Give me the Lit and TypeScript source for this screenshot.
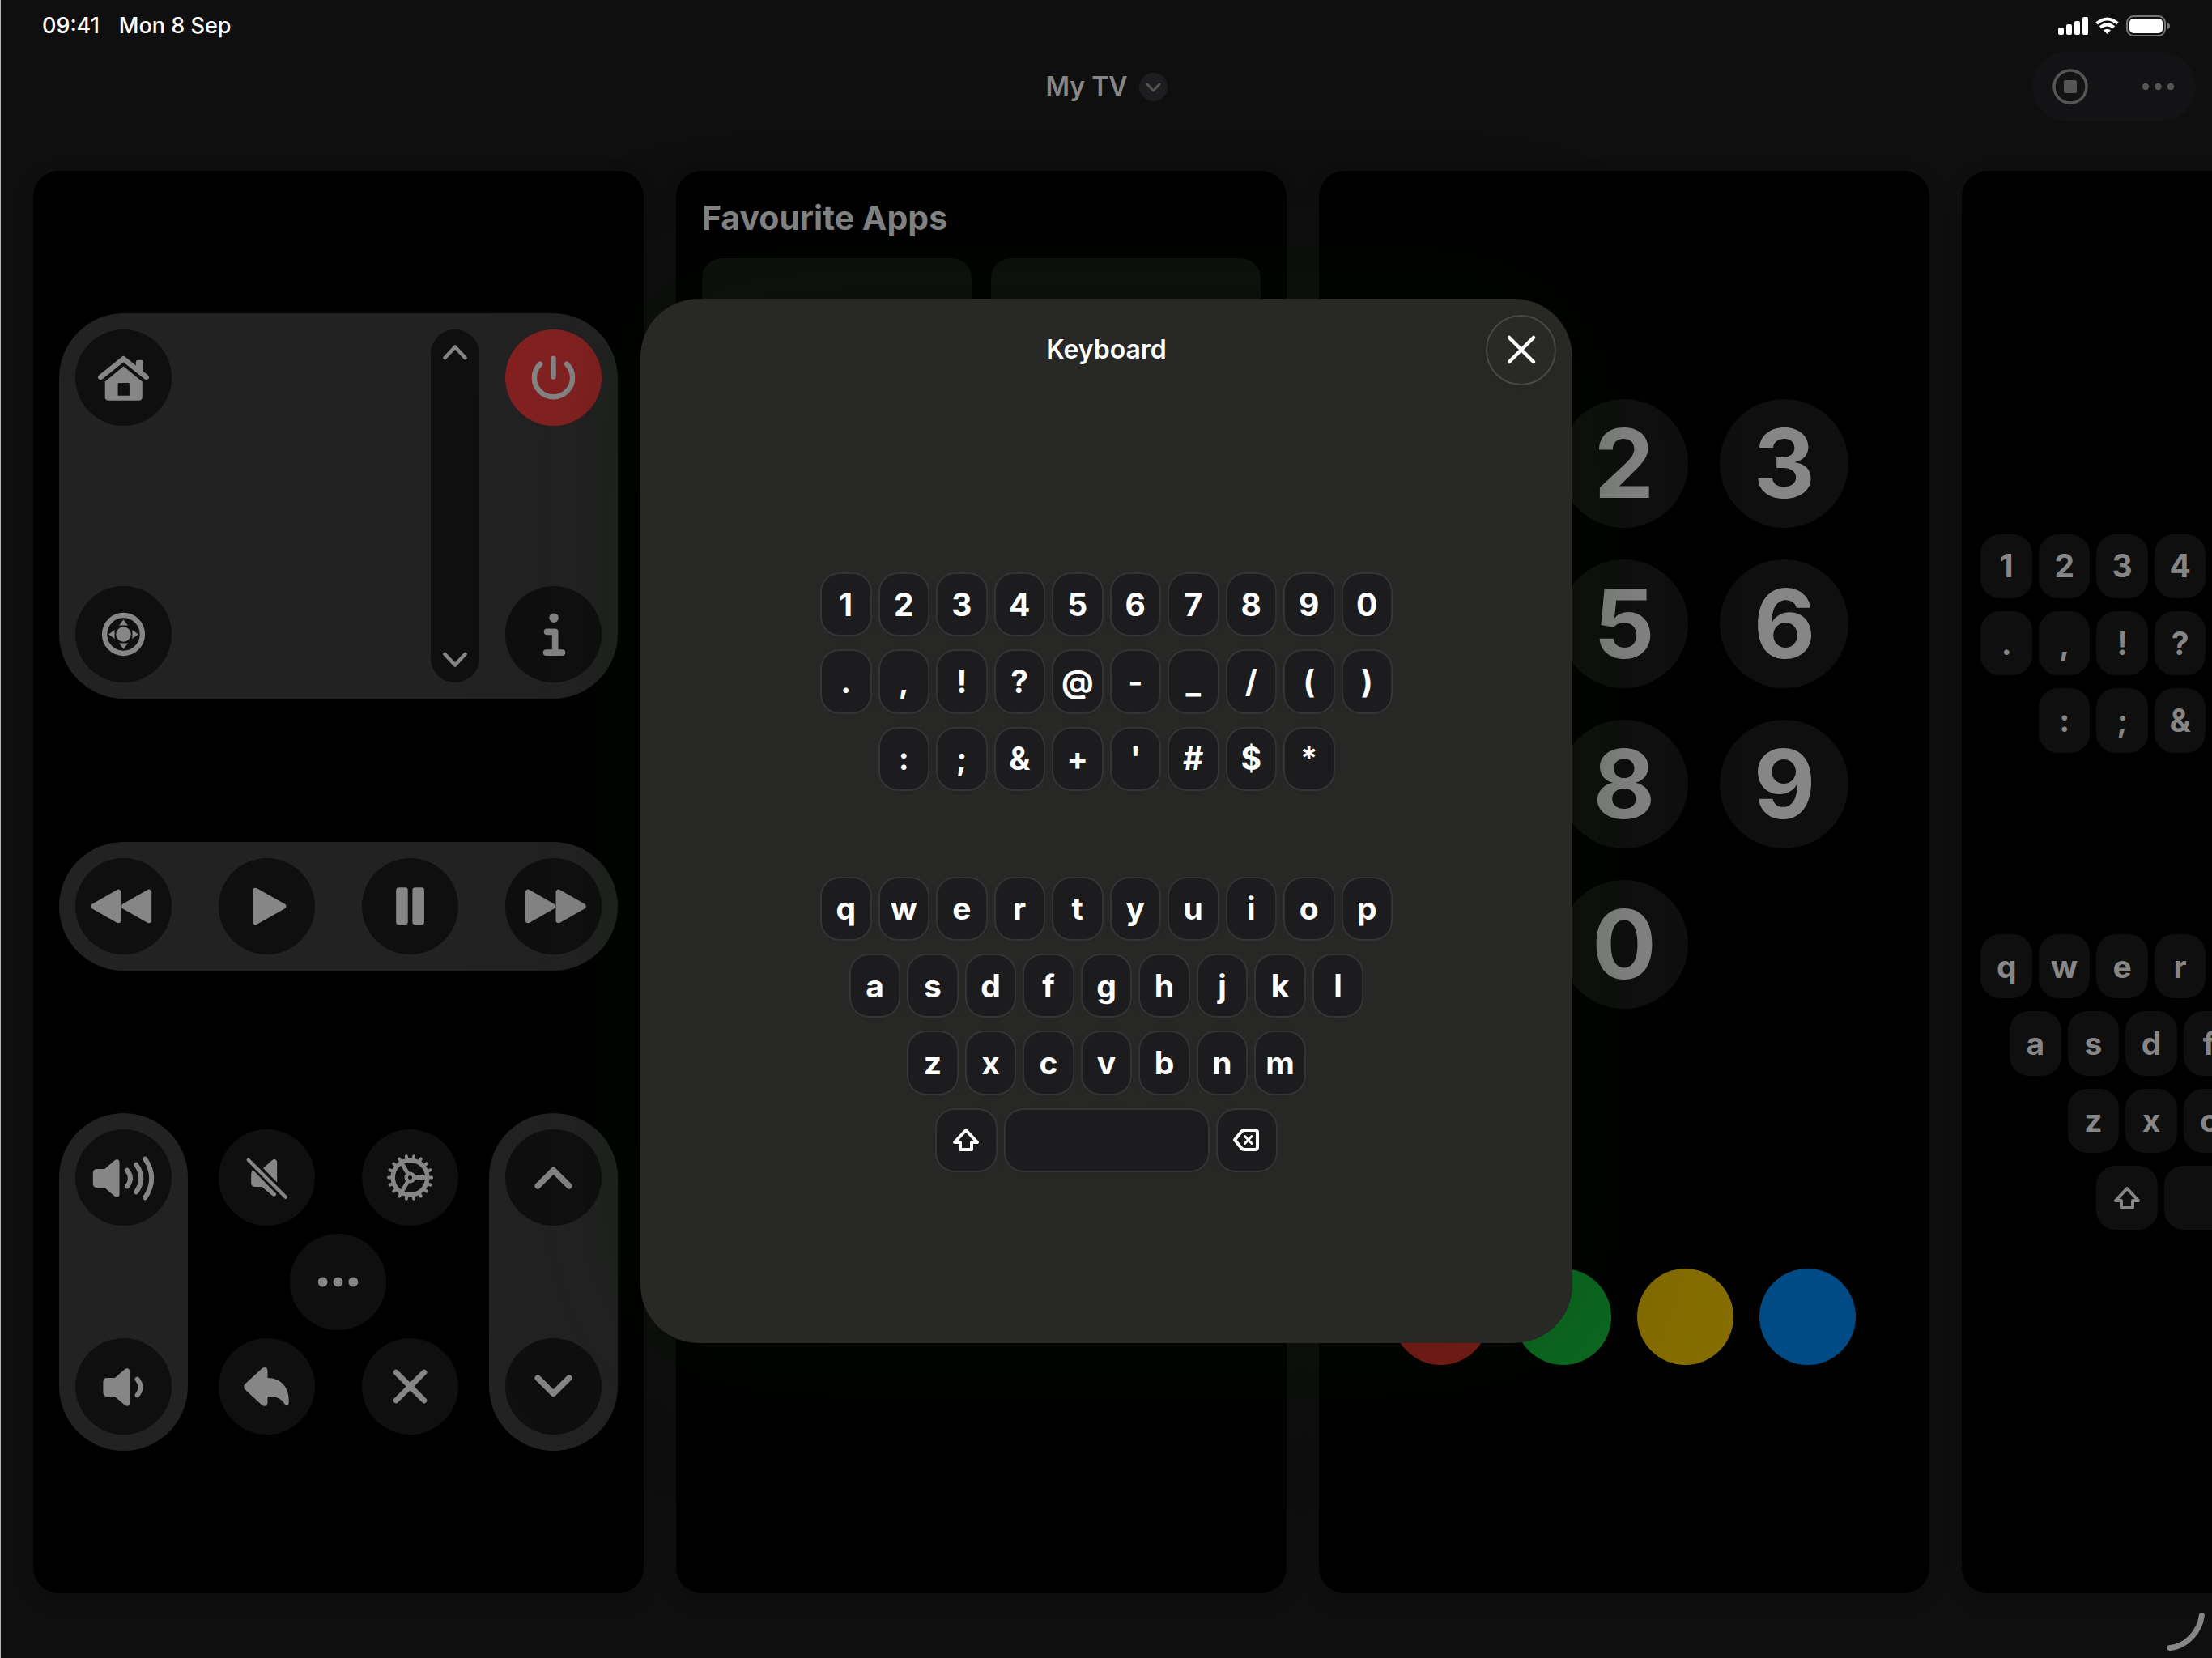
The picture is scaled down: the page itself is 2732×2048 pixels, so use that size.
import { LitElement, html, svg, css, nothing, type TemplateResult } from "lit";
import { customElement, property } from "lit/decorators.js";

const reset = css`
  * {
    box-sizing: border-box;
  }
  button {
    margin: 0;
    padding: 0;
    border: 0;
    background: none;
    color: inherit;
    font: inherit;
    cursor: pointer;
  }
  svg {
    display: block;
    fill: none;
    stroke: none;
  }
  .solid {
    fill: currentColor;
  }
  .line {
    stroke: currentColor;
    stroke-linecap: round;
    stroke-linejoin: round;
  }
`;

/* Glyphs for the round remote buttons, drawn around the origin of a 120-unit box. */
const speaker = svg`
  <path class="solid" d="M-33 -10.5H-23.500L-11.500 -21C-8.500 -23.500 -5 -22.500 -5 -19V21C-5 24.500 -8.500 25.500 -11.500 23L-23.500 12.500H-33Q-38 12.500 -38 7.500V-5.500Q-38 -10.500 -33 -10.500Z"/>`;

const gearTeeth = Array.from({ length: 18 }, (_, i) => {
  const a = (i * 20 * Math.PI) / 180;
  const c = Math.cos(a);
  const s = Math.sin(a);
  return svg`<line class="line" stroke-width="4" x1=${c * 23} y1=${s * 23} x2=${c * 26.8} y2=${s * 26.8} />`;
});

const glyphs: Record<string, TemplateResult> = {
  home: svg`
    <path class="line" stroke-width="6.500" d="M-28.500 -0.500L0 -23.500L28.500 -0.500"/>
    <path class="solid" d="M15.500 -9V-19.500Q15.500 -22 18 -22H22Q24.300 -22 24.300 -19.500V-2Z"/>
    <path class="solid" fill-rule="evenodd" d="M0 -14L23.500 5V24Q23.500 28.500 19 28.500H-18.500Q-23 28.500 -23 24V5ZM-5.500 6.500Q-7 6.500 -7 8V22.500H7.500V8Q7.500 6.500 6 6.500Z"/>`,
  power: svg`
    <path class="line" stroke-width="6.500" d="M0 -24V-1M-16.500 -17A23.800 23.800 0 1 0 16.500 -17"/>`,
  dpad: svg`
    <circle class="line" stroke-width="6.500" r="23.600"/>
    <circle class="solid" r="9.300"/>
    <path class="solid" d="M0 -18.500L5.500 -11H-5.500ZM0 18.500L5.500 11H-5.500ZM-18.500 0L-11 -5.500V5.500ZM18.500 0L11 -5.500V5.500Z"/>`,
  info: svg`
    <circle class="solid" cx="0.600" cy="-20.500" r="5.800"/>
    <path class="line" stroke-width="7.800" d="M-8 -3.200H2.200V22.800M-9 22.800H11"/>`,
  rewind: svg`
    <path class="solid line" stroke-width="7" d="M-37 0L-6.500 -17.500V17.500ZM1 0L31.500 -17.500V17.500Z"/>`,
  play: svg`<path class="solid line" stroke-width="7" d="M-14 -19.500L20.500 0L-14 19.500Z"/>`,
  pause: svg`
    <rect class="solid" x="-17.500" y="-23.500" width="14.700" height="46.500" rx="3.500"/>
    <rect class="solid" x="2.900" y="-23.500" width="14.700" height="46.500" rx="3.500"/>`,
  forward: svg`
    <path class="solid line" stroke-width="7" d="M37 0L6.500 -17.500V17.500ZM-1 0L-31.500 -17.500V17.500Z"/>`,
  louder: svg`${speaker}
    <path class="line" stroke-width="6" d="M4.500 -9Q12.500 1 4.500 11M15.800 -16Q28 1 15.800 18M27 -23Q43 1 27 25"/>`,
  quieter: svg`<g transform="translate(12.700 0)">${speaker}
    <path class="line" stroke-width="6" d="M4.500 -9Q12.500 1 4.500 11"/></g>`,
  mute: svg`
    <path class="line" stroke-width="4.400" d="M-23 -22L23.500 24.500"/>
    <path class="solid" d="M-4.500 -11.500L6.500 -21.500C9.500 -24 12.700 -22.500 12.700 -19V6Z"/>
    <path class="solid" d="M-17.500 -9.500L12 20.500C11 24 8.500 24 6 22L-6 11.500H-14.500Q-19.500 11.500 -19.500 6.500V-4Q-19.500 -7.500 -17.500 -9.500Z"/>`,
  gear: svg`
    <circle class="line" stroke-width="5.500" r="21.500"/>
    <circle class="line" stroke-width="4.500" r="4.800"/>
    <path class="line" stroke-width="5" d="M6.500 0H20M-3.500 -6L-10.500 -18M-3.500 6L-10.500 18"/>
    ${gearTeeth}`,
  more: svg`
    <circle class="solid" cx="-19" r="6"/><circle class="solid" r="6"/><circle class="solid" cx="19" r="6"/>`,
  reply: svg`
    <path class="solid" d="M-27 -3L-7 -21.500C-3.500 -25 1 -24 1 -19.500V-10.500C18 -10.500 28 2 27.500 19C27.500 25.500 23.500 25 21.500 21C17 14 11 12.500 1 12.500V20C1 25 -3.500 26 -7 22.500L-27 4Q-30 0.500 -27 -3Z"/>`,
  close: svg`<path class="line" stroke-width="7" d="M-17.500 -17.500L17.500 17.500M17.500 -17.500L-17.500 17.500"/>`,
  up: svg`<path class="line" stroke-width="7.500" d="M-19.500 10.500L0 -9L19.500 10.500"/>`,
  down: svg`<path class="line" stroke-width="7.500" d="M-19.500 -10.500L0 9L19.500 -10.500"/>`,
};

type Key = { label: string; kind?: "shift" | "space" | "delete" };

const letters = (row: string): Key[] => [...row].map((label) => ({ label }));

const symbolRows: Key[][] = ["1234567890", ".,!?@-_/()", ":;&+'#$*"].map(letters);
const letterRows: Key[][] = [
  ...["qwertyuiop", "asdfghjkl", "zxcvbnm"].map(letters),
  [
    { label: "Shift", kind: "shift" },
    { label: "Space", kind: "space" },
    { label: "Delete", kind: "delete" },
  ],
];

@customElement("remote-button")
class RemoteButton extends LitElement {
  static styles = [
    reset,
    css`
      :host {
        display: block;
        flex: none;
        width: 119px;
        height: 119px;
      }
      .round {
        display: block;
        width: 100%;
        height: 100%;
        border-radius: 50%;
        background: #0f0f0f;
        color: #868686;
      }
      .danger {
        background: #842121;
      }
    `,
  ];

  @property() icon = "";
  @property() label = "";
  @property({ type: Boolean }) danger = false;

  render() {
    return html`<button class="round ${this.danger ? "danger" : ""}" aria-label=${this.label}>
      <svg viewBox="-60 -60 120 120" width="100%" height="100%" aria-hidden="true">${glyphs[this.icon]}</svg>
    </button>`;
  }
}

@customElement("text-keyboard")
class TextKeyboard extends LitElement {
  static styles = [
    reset,
    css`
      :host {
        display: grid;
        grid-template-rows: 2fr auto 1fr auto 2fr;
        grid-template-columns: minmax(0, 707px);
        justify-content: center;
        color: #868686;
        font-size: 39px;
        font-weight: 700;
        line-height: 48px;
      }
      .block {
        display: flex;
        flex-direction: column;
        gap: 16px;
      }
      .symbols {
        grid-row: 2;
      }
      .letters {
        grid-row: 4;
      }
      .row {
        display: flex;
        justify-content: center;
        gap: 8px;
      }
      .key {
        display: flex;
        align-items: center;
        justify-content: center;
        width: calc((100% - 72px) * 0.1);
        aspect-ratio: 4 / 5;
        border-radius: 24px;
        background: #0f0f0f;
      }
      .shift,
      .delete {
        width: calc((100% - 72px) * 0.12);
        aspect-ratio: 24 / 25;
      }
      .space {
        width: calc((100% - 72px) * 0.4);
        aspect-ratio: auto;
      }
      :host([raised]) {
        color: #ffffff;
      }
      :host([raised]) .key {
        background: #1c1c1e;
        border: 2px solid #343437;
        box-shadow: 0 4px 16px rgba(0, 0, 0, 0.06);
      }
    `,
  ];

  private face(key: Key) {
    if (key.kind === "shift") {
      return html`<svg viewBox="-18 -18 36 36" width="36" height="36" aria-hidden="true">
        <path class="line" stroke-width="4" d="M0 -12L14 3H7V12H-7V3H-14Z" />
      </svg>`;
    }
    if (key.kind === "delete") {
      return html`<svg viewBox="-18 -18 36 36" width="36" height="36" aria-hidden="true">
        <path class="line" stroke-width="4" d="M-15 0L-6.500 -10.500Q-5 -12 -3 -12H10Q13 -12 13 -9V9Q13 12 10 12H-3Q-5 12 -6.500 10.500Z" />
        <path class="line" stroke-width="3" d="M-2.500 -4.500L6 4.500M6 -4.500L-2.500 4.500" />
      </svg>`;
    }
    return key.kind === "space" ? nothing : key.label;
  }

  private rows(rows: Key[][]) {
    return rows.map(
      (row) => html`<div class="row">
        ${row.map((key) => html`<button class="key ${key.kind ?? ""}" aria-label=${key.label}>${this.face(key)}</button>`)}
      </div>`,
    );
  }

  render() {
    return html`
      <div class="block symbols">${this.rows(symbolRows)}</div>
      <div class="block letters">${this.rows(letterRows)}</div>
    `;
  }
}

@customElement("app-root")
class AppRoot extends LitElement {
  static styles = [
    reset,
    css`
      :host {
        display: block;
        font-family: Inter, "Liberation Sans", sans-serif;
      }
      .app {
        position: relative;
        display: flex;
        flex-direction: column;
        min-height: 100vh;
        padding-bottom: 80px;
        overflow: hidden;
        border-left: 1px solid #b4b6b6;
        background: #0f0f0f;
        color: #868686;
      }
      .status {
        display: flex;
        align-items: center;
        justify-content: space-between;
        height: 64px;
        padding: 0 51px;
        color: #ffffff;
        font-size: 27px;
        font-weight: 500;
        line-height: 32px;
      }
      .clock,
      .signals {
        display: flex;
        align-items: center;
        gap: 24px;
      }
      .signals {
        gap: 9px;
      }
      .bar {
        display: grid;
        grid-template-columns: 1fr auto 1fr;
        align-items: center;
        height: 86px;
        padding: 0 20px;
        margin-bottom: 61px;
      }
      .device {
        grid-column: 2;
        display: flex;
        align-items: center;
        gap: 14px;
        font-size: 32px;
        font-weight: 600;
        line-height: 40px;
      }
      .disclosure {
        display: grid;
        place-items: center;
        width: 35px;
        height: 35px;
        border-radius: 50%;
        background: #1d1d1f;
        color: #555555;
      }
      .tools {
        display: flex;
        justify-self: end;
        gap: 22px;
        padding: 0 4px;
        border-radius: 43px;
        background: #131315;
        color: #555555;
      }
      .tool {
        display: grid;
        place-items: center;
        width: 86px;
        height: 86px;
      }
      .panels {
        flex: 1;
        display: flex;
        gap: 40px;
        padding-left: 40px;
      }
      .panel {
        display: flex;
        flex-direction: column;
        flex: 0 0 max(694px, calc((100% - 429px) / 3));
        border-radius: 32px;
        background: #000000;
        box-shadow: 0 8px 24px rgba(0, 0, 0, 0.2);
      }
      .panel > text-keyboard {
        flex: 1;
      }
      .controls {
        justify-content: space-evenly;
        padding: 0 32px;
      }
      .tray {
        display: flex;
        justify-content: space-between;
        padding: 20px;
        border-radius: 80px;
        background: #222222;
      }
      .pad {
        height: 476px;
      }
      .stack {
        display: flex;
        flex-direction: column;
        justify-content: space-between;
      }
      .pad-right {
        display: flex;
        gap: 32px;
      }
      .scroller {
        display: flex;
        flex-direction: column;
        justify-content: space-between;
        width: 60px;
        padding: 18px 0;
        border-radius: 30px;
        background: #0f0f0f;
      }
      .step {
        display: grid;
        justify-items: center;
      }
      .cluster {
        display: flex;
        justify-content: space-between;
      }
      .middle {
        display: flex;
        flex-direction: column;
        gap: 10px;
        width: 296px;
        padding: 20px 0;
      }
      .pair {
        display: flex;
        justify-content: space-between;
      }
      .solo {
        display: flex;
        justify-content: center;
      }
      .apps {
        padding: 32px;
      }
      .heading {
        margin: 0 0 24px;
        font-size: 41px;
        font-weight: 700;
        line-height: 52px;
      }
      .tiles {
        display: grid;
        grid-template-columns: 1fr 1fr;
        gap: 24px;
      }
      .tile {
        aspect-ratio: 1;
        border-radius: 24px;
        background: #0f0f0f;
      }
      .numbers {
        align-items: center;
        justify-content: space-evenly;
        gap: 40px;
      }
      .digits {
        display: grid;
        grid-template-columns: repeat(3, 159px);
        grid-auto-rows: 159px;
        gap: 39px;
      }
      .digit {
        border-radius: 50%;
        background: #0f0f0f;
        font-size: 118px;
        font-weight: 700;
        line-height: 159px;
      }
      .zero {
        grid-column: 2;
      }
      .colours {
        display: flex;
        gap: 32px;
      }
      .colour {
        width: 119px;
        height: 119px;
        border-radius: 50%;
      }
      .red {
        background: #7d1b17;
      }
      .green {
        background: #0c6a21;
      }
      .yellow {
        background: #856d00;
      }
      .blue {
        background: #004b85;
      }
      .overlay {
        position: absolute;
        inset: 0;
        display: flex;
        align-items: center;
        justify-content: center;
        padding: 0 40px 20px;
      }
      .sheet {
        display: flex;
        flex-direction: column;
        width: 100%;
        max-width: 1151px;
        min-height: 63vh;
        border-radius: 72px;
        background: #282826;
        box-shadow: 0 0 200px rgba(8, 26, 0, 0.3);
      }
      .sheet-head {
        display: grid;
        grid-template-columns: 1fr auto 1fr;
        align-items: center;
        padding: 20px;
        color: #ffffff;
      }
      .sheet-title {
        grid-column: 2;
        margin: 0;
        font-size: 32px;
        font-weight: 600;
        line-height: 40px;
      }
      .dismiss {
        justify-self: end;
        display: grid;
        place-items: center;
        width: 87px;
        height: 87px;
        border: 2px solid #484844;
        border-radius: 50%;
        background: #292926;
        box-shadow: 0 4px 20px rgba(0, 0, 0, 0.08);
      }
      .sheet > text-keyboard {
        flex: 1;
      }
      .corner {
        position: absolute;
        right: 8px;
        bottom: 8px;
      }
    `,
  ];

  private button(icon: string, label: string, danger = false) {
    return html`<remote-button icon=${icon} label=${label} ?danger=${danger}></remote-button>`;
  }

  private statusBar() {
    return html`<div class="status">
      <div class="clock"><span>09:41</span><span>Mon 8 Sep</span></div>
      <div class="signals">
        <svg width="37" height="26" viewBox="0 0 37 26" role="img" aria-label="Signal">
          <rect class="solid" x="0" y="15" width="7" height="9" rx="2" />
          <rect class="solid" x="10" y="11" width="7" height="13" rx="2" />
          <rect class="solid" x="20" y="7" width="7" height="17" rx="2" />
          <rect class="solid" x="30" y="2" width="7" height="22" rx="2" />
        </svg>
        <svg width="29" height="26" viewBox="0 0 29 26" role="img" aria-label="Wi-Fi">
          <path stroke="currentColor" stroke-width="4" d="M1.500 10Q14.500 -1 27.500 10" />
          <path stroke="currentColor" stroke-width="4" d="M6.200 14.800Q14.500 8 22.800 14.800" />
          <path class="solid" d="M10 18.300Q14.500 15 19 18.300L14.500 23Z" />
        </svg>
        <svg width="55" height="26" viewBox="0 0 55 26" role="img" aria-label="Battery">
          <rect x="1" y="1" width="47" height="24" rx="8" stroke="#777777" stroke-width="2" />
          <rect class="solid" x="4" y="4" width="41" height="18" rx="5" />
          <path fill="#777777" d="M51 9Q54 10 54 13Q54 16 51 17Z" />
        </svg>
      </div>
    </div>`;
  }

  private navBar() {
    return html`<header class="bar">
      <button class="device">
        My TV
        <span class="disclosure">
          <svg width="19" height="19" viewBox="0 0 19 19" aria-hidden="true">
            <path class="line" stroke-width="3" d="M2 6L9.500 14L17 6" />
          </svg>
        </span>
      </button>
      <div class="tools">
        <button class="tool" aria-label="Stop">
          <svg width="44" height="44" viewBox="-22 -22 44 44" aria-hidden="true">
            <circle class="line" stroke-width="3.500" r="20" />
            <rect class="solid" x="-8" y="-8" width="16" height="16" rx="2" />
          </svg>
        </button>
        <button class="tool" aria-label="More">
          <svg width="44" height="44" viewBox="-22 -22 44 44" aria-hidden="true">
            <circle class="solid" cx="-15" r="4.200" />
            <circle class="solid" cx="0.500" r="4.200" />
            <circle class="solid" cx="16" r="4.200" />
          </svg>
        </button>
      </div>
    </header>`;
  }

  private controlsPanel() {
    return html`<section class="panel controls" aria-label="Controls">
      <div class="tray pad">
        <div class="stack">${this.button("home", "Home")}${this.button("dpad", "Direction pad")}</div>
        <div class="pad-right">
          <div class="scroller">
            <button class="step" aria-label="Scroll up">
              <svg width="34" height="20" viewBox="0 0 34 20" aria-hidden="true">
                <path class="line" stroke-width="4.500" d="M4.500 17L17 3.500L29.500 17" />
              </svg>
            </button>
            <button class="step" aria-label="Scroll down">
              <svg width="34" height="20" viewBox="0 0 34 20" aria-hidden="true">
                <path class="line" stroke-width="4.500" d="M4.500 3L17 16.500L29.500 3" />
              </svg>
            </button>
          </div>
          <div class="stack">${this.button("power", "Power", true)}${this.button("info", "Info")}</div>
        </div>
      </div>
      <div class="tray">
        ${this.button("rewind", "Rewind")} ${this.button("play", "Play")} ${this.button("pause", "Pause")}
        ${this.button("forward", "Fast forward")}
      </div>
      <div class="cluster">
        <div class="tray stack">${this.button("louder", "Volume up")}${this.button("quieter", "Volume down")}</div>
        <div class="middle">
          <div class="pair">${this.button("mute", "Mute")}${this.button("gear", "Settings")}</div>
          <div class="solo">${this.button("more", "More")}</div>
          <div class="pair">${this.button("reply", "Back")}${this.button("close", "Exit")}</div>
        </div>
        <div class="tray stack">${this.button("up", "Channel up")}${this.button("down", "Channel down")}</div>
      </div>
    </section>`;
  }

  private appsPanel() {
    return html`<section class="panel apps">
      <h2 class="heading">Favourite Apps</h2>
      <div class="tiles">
        <div class="tile"></div>
        <div class="tile"></div>
      </div>
    </section>`;
  }

  private numbersPanel() {
    const digits = [..."1234567890"];
    const colours = ["red", "green", "yellow", "blue"];
    return html`<section class="panel numbers" aria-label="Numbers">
      <div class="digits">
        ${digits.map((d) => html`<button class="digit ${d === "0" ? "zero" : ""}">${d}</button>`)}
      </div>
      <div class="colours">${colours.map((c) => html`<button class="colour ${c}" aria-label=${c}></button>`)}</div>
    </section>`;
  }

  render() {
    return html`<div class="app">
      ${this.statusBar()} ${this.navBar()}
      <main class="panels">
        ${this.controlsPanel()} ${this.appsPanel()} ${this.numbersPanel()}
        <section class="panel" aria-label="Keys"><text-keyboard></text-keyboard></section>
      </main>
      <div class="overlay">
        <div class="sheet" role="dialog" aria-labelledby="sheet-title">
          <div class="sheet-head">
            <h1 class="sheet-title" id="sheet-title">Keyboard</h1>
            <button class="dismiss" aria-label="Close">
              <svg width="40" height="40" viewBox="-20 -20 40 40" aria-hidden="true">
                <path class="line" stroke-width="4.500" d="M-15 -15L15 15M15 -15L-15 15" />
              </svg>
            </button>
          </div>
          <text-keyboard raised></text-keyboard>
        </div>
      </div>
      <svg class="corner" width="48" height="48" viewBox="0 0 48 48" aria-hidden="true">
        <path class="line" stroke-width="7" d="M43.300 3.500C41 23 25 41.500 4 43.500" />
      </svg>
    </div>`;
  }
}
